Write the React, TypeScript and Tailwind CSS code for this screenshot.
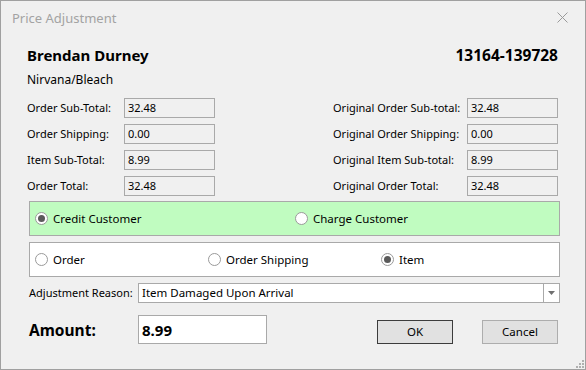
import React from "react";

const field = "h-[20px] w-[91px] border border-[#a9a9a9] bg-[#f0f0f0] pl-[3px] text-[11px] leading-[18px] text-black";

function Radio({ label, checked = false }: { label: string; checked?: boolean }) {
  return (
    <div className="flex items-center gap-[5px]">
      <span className="flex h-[13px] w-[13px] items-center justify-center rounded-full border border-[#9a9a9a] bg-white">
        {checked && <span className="h-[7px] w-[7px] rounded-full bg-[#5a5a5a]" />}
      </span>
      <span className="whitespace-nowrap text-[11.5px] leading-[16px] text-black">{label}</span>
    </div>
  );
}

function Row({ label, value, labelW }: { label: string; value: string; labelW: string }) {
  return (
    <div className="flex items-center">
      <span className={`${labelW} whitespace-nowrap text-[11px] leading-[16px] text-black`}>{label}</span>
      <div className={field}>{value}</div>
    </div>
  );
}

export default function App() {
  return (
    <div className="flex h-[370px] w-[586px] flex-col overflow-hidden border border-[#a0a0a0] bg-[#f0f0f0] font-['Noto_Sans',sans-serif] text-black">
      {/* title bar */}
      <div className="flex h-[31px] items-center justify-between pl-[11px] pr-[17px] pt-[2px]">
        <span className="text-[13px] leading-[18px] text-[#a3a3a3]">Price Adjustment</span>
        <svg width="11" height="11" viewBox="0 0 11 11">
          <path d="M0.5 0.5 L10.5 10.5 M10.5 0.5 L0.5 10.5" stroke="#9a9a9a" strokeWidth="1" />
        </svg>
      </div>

      <div className="flex flex-col pl-[26px] pr-[27px]">
        <div className="mt-[13px] flex items-center justify-between">
          <span className="text-[15px] font-bold leading-[20px]">Brendan Durney</span>
          <span className="text-[15.5px] font-bold leading-[20px]">13164-139728</span>
        </div>
        <div className="mt-[7px] text-[12px] leading-[16px]">Nirvana/Bleach</div>

        <div className="mt-[10px] flex justify-between">
          <div className="flex flex-col gap-[6px]">
            <Row label="Order Sub-Total:" value="32.48" labelW="w-[97px]" />
            <Row label="Order Shipping:" value="0.00" labelW="w-[97px]" />
            <Row label="Item Sub-Total:" value="8.99" labelW="w-[97px]" />
            <Row label="Order Total:" value="32.48" labelW="w-[97px]" />
          </div>
          <div className="flex flex-col gap-[6px]">
            <Row label="Original Order Sub-total:" value="32.48" labelW="w-[134px]" />
            <Row label="Original Order Shipping:" value="0.00" labelW="w-[134px]" />
            <Row label="Original Item Sub-total:" value="8.99" labelW="w-[134px]" />
            <Row label="Original Order Total:" value="32.48" labelW="w-[134px]" />
          </div>
        </div>

        <div className="ml-[2px] mr-[-2px] mt-[5px] flex h-[35px] items-center border border-[#a9a9a9] bg-[#c0fcc0] pl-[5px]">
          <div className="w-[260px]">
            <Radio label="Credit Customer" checked />
          </div>
          <Radio label="Charge Customer" />
        </div>

        <div className="ml-[2px] mr-[-2px] mt-[6px] flex h-[35px] items-center border border-[#a9a9a9] bg-white pl-[5px]">
          <div className="w-[173px]">
            <Radio label="Order" />
          </div>
          <div className="w-[173px]">
            <Radio label="Order Shipping" />
          </div>
          <Radio label="Item" checked />
        </div>

        <div className="ml-[2px] mr-[-2px] mt-[6px] flex items-center">
          <span className="w-[109px] whitespace-nowrap text-[11px] leading-[16px]">Adjustment Reason:</span>
          <div className="flex h-[20px] flex-1 items-center border border-[#a9a9a9] bg-white">
            <span className="flex-1 whitespace-nowrap pl-[3px] text-[11.5px] leading-[18px]">Item Damaged Upon Arrival</span>
            <div className="flex h-full w-[16px] items-center justify-center border-l border-[#a9a9a9]">
              <svg width="7" height="4" viewBox="0 0 7 4">
                <path d="M0 0 H7 L3.5 4 Z" fill="#707070" />
              </svg>
            </div>
          </div>
        </div>

        <div className="ml-[2px] mr-[-2px] mt-[12px] flex items-end">
          <div className="flex items-center">
            <span className="w-[109px] text-[15.5px] font-bold leading-[20px]">Amount:</span>
            <div className="flex h-[29px] w-[129px] items-center border border-[#a9a9a9] bg-white pl-[3px] text-[15px] font-bold leading-[20px]">
              8.99
            </div>
          </div>
          <div className="ml-auto mr-[2px] flex gap-[29px]">
            <button className="h-[24px] w-[76px] border border-[#3c3c3c] bg-[#e1e1e1] text-[11.5px] leading-[16px]">OK</button>
            <button className="h-[24px] w-[76px] border border-[#adadad] bg-[#e1e1e1] text-[11.5px] leading-[16px]">Cancel</button>
          </div>
        </div>
      </div>

      {/* resize grip */}
      <div className="relative flex-1">
        <svg width="8" height="8" viewBox="0 0 8 8" className="absolute bottom-[1px] right-[1px]">
          <rect x="6" y="0" width="2" height="2" fill="#b0b0b0" />
          <rect x="3" y="3" width="2" height="2" fill="#b0b0b0" />
          <rect x="6" y="3" width="2" height="2" fill="#b0b0b0" />
          <rect x="0" y="6" width="2" height="2" fill="#b0b0b0" />
          <rect x="3" y="6" width="2" height="2" fill="#b0b0b0" />
          <rect x="6" y="6" width="2" height="2" fill="#b0b0b0" />
        </svg>
      </div>
    </div>
  );
}
